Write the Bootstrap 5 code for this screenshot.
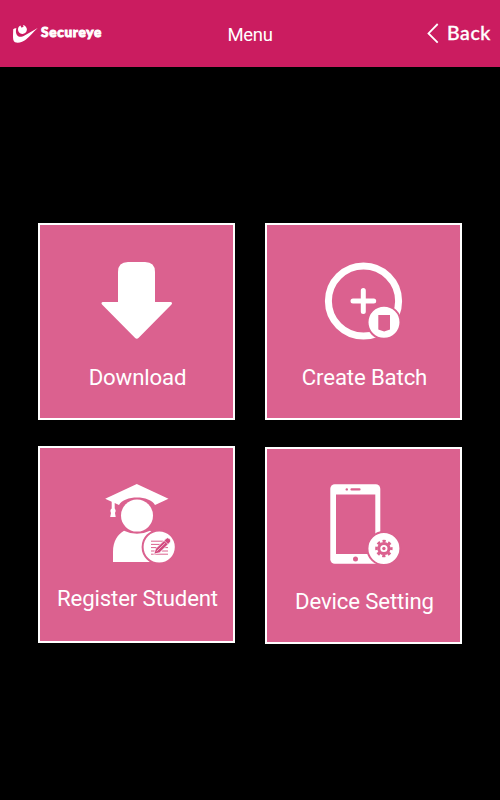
<!DOCTYPE html>
<html lang="en">
<head>
<meta charset="utf-8">
<meta name="viewport" content="width=device-width, initial-scale=1">
<title>Menu</title>
<link href="https://cdn.jsdelivr.net/npm/bootstrap@5.3.0/dist/css/bootstrap.min.css" rel="stylesheet">
<style>
body{background:#000;color:#fff;font-family:Roboto,sans-serif;min-height:800px}
.topbar{background:#cb1c60;height:67px}
.brand-area,.back-area{width:110px}
.brand-area{padding-left:13px}
.brand-name{font:900 13.6px/20px Lato,sans-serif;letter-spacing:.7px;-webkit-text-stroke:.9px #fff;margin-left:3px;padding-bottom:3px}
.screen-title{font-size:18.5px;line-height:24px;letter-spacing:-.3px;padding-top:2px}
.back-area{padding-right:9px}
.back-text{font:500 19.5px/24px Lato,"Noto Sans",sans-serif;letter-spacing:.6px;margin-left:8px;-webkit-text-stroke:.35px #fff;padding-bottom:1px}
.tiles{display:grid;grid-template-columns:197px 197px;column-gap:30px;row-gap:26px;padding-top:156px}
.tile{height:197px;background:#db618f;border:2px solid #fff;padding-top:25px;color:#fff}
.tile-low{padding-top:27px}
.tile-right{margin-top:1px;padding-top:26px}
.tile-label{font-size:22.2px;line-height:26px;letter-spacing:-.14px;white-space:nowrap;margin-top:14px;padding-left:2px}
.label-down{margin-top:14px}
.label-reg{margin-top:10px}
.label-dev{margin-top:13px}
.tile svg{flex:none}
</style>
<script src="https://cdn.jsdelivr.net/npm/bootstrap@5.3.0/dist/js/bootstrap.bundle.min.js"></script>
</head>
<body>
<header class="topbar d-flex align-items-center justify-content-between">
  <div class="brand-area d-flex align-items-center">
    <svg width="25" height="20" viewBox="13 23 25 20" fill="#fff" class="flex-shrink-0">
      <path d="M13.2 28.2C14 27.3 15.3 27 16.4 27.2C15.5 29 15.8 33 17.3 34.6C19 36.5 22 36 25 34.2L37.7 27C34 30.5 29.5 35.5 26 38.5C23 41 18.5 42.4 15 41.3C13.2 40.3 13 37.4 13 35Z"/>
      <path d="M20.3 24.5L21.6 26.7L23.7 25.6L22.8 23.9C25.3 24.2 27.1 26.4 26.9 28.8C26.6 31.3 24.6 33.1 22.2 32.9C19.7 32.7 17.9 30.7 18 28.3C18.1 26.6 18.9 25.2 20.3 24.5Z"/>
    </svg>
    <span class="brand-name">Secureye</span>
  </div>
  <div class="screen-title">Menu</div>
  <a href="#" class="back-area d-flex align-items-center justify-content-end text-white text-decoration-none">
    <svg width="12" height="22" viewBox="428 22 12 22" class="flex-shrink-0"><path d="M438.7 23L429.5 32.4L438.7 41.7" fill="none" stroke="#fff" stroke-width="1.8"/></svg>
    <span class="back-text">Back</span>
  </a>
</header>
<main class="tiles justify-content-center">
  <a href="#" class="tile d-flex flex-column align-items-center text-decoration-none">
    <svg width="99" height="100" viewBox="87 250 99 100" fill="#fff">
      <path d="M128 262H145Q155 262 155 272V302H170.5Q173 302.5 171.5 304.5L138.7 337.8Q136.8 339.5 134.9 337.8L102 304.5Q100.5 302.5 103 302H118V272Q118 262 128 262Z"/>
    </svg>
    <span class="tile-label label-down">Download</span>
  </a>
  <a href="#" class="tile d-flex flex-column align-items-center text-decoration-none">
    <svg width="99" height="100" viewBox="314 250 99 100">
      <circle cx="363.5" cy="301" r="35.1" fill="none" stroke="#fff" stroke-width="7"/>
      <path d="M363.3 290.5V311.5M353 301H373.7" stroke="#fff" stroke-width="5" stroke-linecap="round"/>
      <circle cx="384" cy="322.3" r="16.5" fill="#fff" stroke="#db618f" stroke-width="2"/>
      <path d="M378.3 315H390V329.5L384.2 331.5L378.3 329.5Z" fill="#db618f"/>
    </svg>
    <span class="tile-label">Create Batch</span>
  </a>
  <a href="#" class="tile tile-low d-flex flex-column align-items-center text-decoration-none">
    <svg width="99" height="100" viewBox="87 475 99 100">
      <path d="M113 562V552C113 541 118 534 124 530.7Q137 537 150 530.7C155 533.5 159 539 160 546V562Z" fill="#fff"/>
      <path d="M105.2 498.8L136.8 484L168.5 498.8L155 505C150 495 124 495 119 505L114.7 503V508.5Q116.5 510.5 115 513L115.7 517H110.2L111 513Q109.5 510 111.7 508.5V501.8Z" fill="#fff"/>
      <circle cx="137" cy="515.6" r="16" fill="#fff"/>
      <circle cx="159.2" cy="547" r="16.6" fill="#fff" stroke="#db618f" stroke-width="2"/>
      <path d="M151 541.2H163M151 544.4H161M151 547.6H158M151 551H155M151 554.2H168M162 551H168M164 547.6H168" stroke="#db618f" stroke-width="1"/>
      <path d="M153.8 554.3L155.5 548.8L166 538.6Q167.5 537 169 538.3L170.4 539.7Q171.4 541 170 542.5L159.7 552.7Z" fill="#d24b80" stroke="#fff" stroke-width=".8"/>
      <path d="M164 540.5L168.4 544.6M156.7 551.2L165 543.2" stroke="#fff" stroke-width=".6"/>
    </svg>
    <span class="tile-label label-reg">Register Student</span>
  </a>
  <a href="#" class="tile tile-right d-flex flex-column align-items-center text-decoration-none">
    <svg width="99" height="100" viewBox="314 475 99 100">
      <rect x="330.3" y="484.2" width="50" height="79.6" rx="4.5" fill="#fff"/>
      <path d="M336 494.5H375.3V554H336Z" fill="#db618f"/>
      <path d="M351.5 489.4H359.5" stroke="#db618f" stroke-width="2.2" stroke-linecap="round"/>
      <circle cx="346.8" cy="489.4" r="1.2" fill="#db618f"/>
      <circle cx="355.5" cy="559" r="2.5" fill="#db618f"/>
      <circle cx="383.9" cy="548.5" r="16.5" fill="#fff" stroke="#db618f" stroke-width="2"/>
      <circle cx="383.9" cy="548.5" r="7.4" fill="none" stroke="#db618f" stroke-width="2.6" stroke-dasharray="3.2 2.612" stroke-dashoffset="1.6"/>
      <circle cx="383.9" cy="548.5" r="5.1" fill="none" stroke="#db618f" stroke-width="3"/>
      <circle cx="383.9" cy="548.5" r="1.7" fill="#db618f"/>
    </svg>
    <span class="tile-label label-dev">Device Setting</span>
  </a>
</main>
</body>
</html>
